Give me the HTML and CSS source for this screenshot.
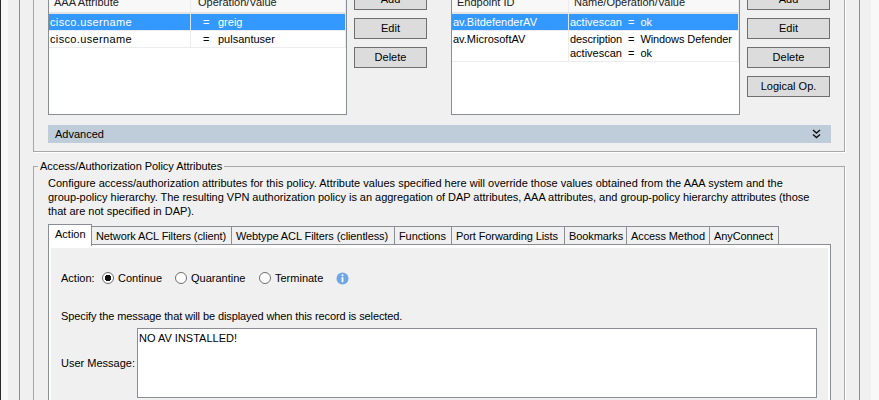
FILE: index.html
```html
<!DOCTYPE html>
<html lang="en">
<head>
<meta charset="utf-8">
<title>Add Dynamic Access Policy</title>
<link rel="stylesheet" href="styles.css">
</head>
<body>
<div class="window">
  <div class="frame">
    <section class="group top-group">
      <div class="lists">
        <div class="listbox aaa">
          <div class="row head"><div class="cell">AAA Attribute</div><div class="cell">Operation/Value</div></div>
          <div class="row selected"><div class="cell user">cisco.username</div><div class="cell val"><span class="eq">=</span>greig</div></div>
          <div class="row"><div class="cell user">cisco.username</div><div class="cell val"><span class="eq">=</span>pulsantuser</div></div>
        </div>
        <div class="buttons aaa-buttons">
          <button class="btn">Add</button>
          <button class="btn">Edit</button>
          <button class="btn">Delete</button>
        </div>
        <div class="listbox endpoint">
          <div class="row head"><div class="cell">Endpoint ID</div><div class="cell">Name/Operation/Value</div></div>
          <div class="row selected"><div class="cell">av.BitdefenderAV</div><div class="cell"><span class="name">activescan</span><span class="eq2">=</span>ok</div></div>
          <div class="row"><div class="cell">av.MicrosoftAV</div><div class="cell"><div class="defender"><span class="name">description</span><span class="eq2">=</span>Windows Defender</div><div><span class="name">activescan</span><span class="eq2">=</span>ok</div></div></div>
        </div>
        <div class="buttons ep-buttons">
          <button class="btn">Add</button>
          <button class="btn">Edit</button>
          <button class="btn">Delete</button>
          <button class="btn">Logical Op.</button>
        </div>
      </div>
      <div class="advanced">
        <span>Advanced</span>
        <svg class="chev" width="9" height="10" viewBox="0 0 9 10"><path d="M1 1l3.5 3L8 1M1 5.5l3.5 3 3.5-3" fill="none" stroke="#111" stroke-width="1.5"/></svg>
      </div>
    </section>
    <fieldset class="group attrs">
      <legend>Access/Authorization Policy Attributes</legend>
      <p class="desc">Configure access/authorization attributes for this policy. Attribute values specified here will override those values obtained from the AAA system and the<br><span class="tight">group-policy hierarchy. The resulting VPN authorization policy is an aggregation of DAP attributes, AAA attributes, and group-policy hierarchy attributes (those</span><br>that are not specified in DAP).</p>
      <div class="tabs">
        <div class="tab active">Action</div>
        <div class="tab t1">Network ACL Filters (client)</div>
        <div class="tab t2">Webtype ACL Filters (clientless)</div>
        <div class="tab t3">Functions</div>
        <div class="tab t4">Port Forwarding Lists</div>
        <div class="tab t5">Bookmarks</div>
        <div class="tab t6">Access Method</div>
        <div class="tab t7">AnyConnect</div>
      </div>
      <div class="panel">
        <div class="action-row">
          <span class="action-label">Action:</span>
          <span class="radio on"></span><span class="opt o1">Continue</span>
          <span class="radio"></span><span class="opt o2">Quarantine</span>
          <span class="radio"></span><span class="opt o3">Terminate</span>
          <svg class="info" width="13" height="13" viewBox="0 0 13 13"><circle cx="6.5" cy="6.5" r="6" fill="#6fa6e6"/><rect x="5.6" y="2.4" width="1.8" height="1.8" fill="#fff"/><rect x="5.6" y="5.2" width="1.8" height="5" fill="#fff"/></svg>
        </div>
        <p class="spec">Specify the message that will be displayed when this record is selected.</p>
        <div class="msg-row">
          <span class="msg-label">User Message:</span>
          <div class="textarea">NO AV INSTALLED!</div>
        </div>
      </div>
    </fieldset>
  </div>
</div>
</body>
</html>
```
FILE: styles.css
```css
* { box-sizing: border-box; }
html, body { margin: 0; padding: 0; }
body {
  width: 879px;
  height: 400px;
  overflow: hidden;
  background: #f0f0f0;
  color: #000;
  font: 11px/14px "Liberation Sans", sans-serif;
}
.window {
  height: 460px;
  margin-top: -40px;
  padding: 0 8px 0 8px;
  background: #f0f0f0;
  border-left: 1px solid #2a2a2a;
  box-shadow: inset 7px 0 0 #f8f8f8, inset -8px 0 0 #f8f8f8;
}
.frame {
  margin-left: 10px;
  width: 841px;
  height: 460px;
  padding: 0 13px;
  border-left: 1px solid #8a8d94;
  border-right: 1px solid #8a8d94;
}
.group {
  border: 1px solid #a8a8a8;
  box-shadow: 1px 1px 0 #fff;
}
.top-group {
  width: 812px;
  height: 192px;
  padding: 0 13px 0 14px;
  border-top: 0;
}
.lists { display: flex; height: 155px; }
.listbox {
  background: #fff;
  border: 1px solid #8a8d94;
  border-top: 0;
  height: 155px;
}
.aaa { width: 299px; }
.endpoint { width: 289px; margin-left: 24px; }
.row {
  display: grid;
  height: 17px;
  border-bottom: 1px solid #ececec;
}
.aaa .row { grid-template-columns: 142px 1fr; }
.endpoint .row { grid-template-columns: 117px 1fr; }
.endpoint .row:last-child { height: 31px; }
.cell { padding: 1px 0 0 1px; border-right: 1px solid #ececec; }
.user { letter-spacing: 0.35px; }
.val { padding-left: 12px; }
.eq { display: inline-block; width: 15px; }
.eq2 { display: inline-block; margin: 0 6px; }
.defender { letter-spacing: -0.1px; }
.head {
  height: 54px;
  align-items: end;
  background: #f8f8f8;
  border-bottom: 2px solid #e4e4e4;
  color: #222;
}
.head .cell { height: 23px; padding: 6px 0 3px 5px; }
.aaa .head .cell + .cell { padding-left: 7px; }
.selected { background: #3399ff; color: #fff; }
.selected .cell { border-right-color: #d8e8f8; }
.buttons {
  display: flex;
  flex-direction: column;
  gap: 8px;
  margin: 29px 0 0 7px;
}
.btn {
  display: block;
  height: 21px;
  padding: 0 0 1px;
  background: #dcdcdc;
  border: 1px solid #6f6f6f;
  color: #000;
  font: inherit;
}
.aaa-buttons .btn { width: 73px; }
.ep-buttons .btn { width: 83px; }
.advanced {
  display: flex;
  justify-content: space-between;
  align-items: center;
  height: 18px;
  margin-top: 10px;
  padding: 0 10px 0 7px;
  background: #bfcddb;
  width: 783px;
}
.attrs {
  margin: 7px 0 0;
  padding: 0 13px 0 14px;
  width: 812px;
  min-width: 0;
  height: 300px;
}
legend {
  margin-left: -10px;
  padding: 0 2px;
  line-height: 14px;
  letter-spacing: -0.05px;
}
.desc { margin: 3px 0 0; height: 42px; white-space: nowrap; }
.tight { letter-spacing: -0.03px; }
.tabs { display: flex; align-items: flex-start; height: 22px; margin-top: 6px; position: relative; z-index: 1; }
.tab {
  height: 18px;
  margin-top: 2px;
  padding-left: 4px;
  border: 1px solid #8a8d94;
  border-left: 0;
  border-bottom: 0;
  line-height: 18px;
  white-space: nowrap;
  letter-spacing: -0.1px;
}
.tab.active {
  height: 22px;
  width: 44px;
  margin-top: 0;
  padding-left: 6px;
  background: #fff;
  border-left: 1px solid #8a8d94;
  letter-spacing: 0;
}
.t1 { width: 140px; }
.t2 { width: 163px; }
.t3 { width: 57px; }
.t4 { width: 113px; }
.t5 { width: 62px; }
.t6 { width: 83px; }
.t7 { width: 69px; }
.panel {
  width: 783px;
  height: 170px;
  margin-top: -2px;
  padding: 0 12px;
  border: 1px solid #8a8d94;
  box-shadow: inset 0 3px 0 #fff, inset 2px 0 0 #fff, inset -2px 0 0 #fff;
}
.action-row { display: flex; align-items: center; height: 14px; margin-top: 26px; }
.action-label { width: 41px; }
.radio {
  width: 12px;
  height: 12px;
  border: 1px solid #6f6f6f;
  border-radius: 50%;
  background: #fff;
}
.radio.on { background: radial-gradient(circle, #111 0 3px, #fff 3.5px); }
.opt { margin-left: 4px; }
.o1 { width: 57px; }
.o2 { width: 68px; }
.o3 { width: 61px; }
.spec { margin: 24px 0 0; letter-spacing: -0.1px; }
.msg-row { display: flex; align-items: center; margin-top: 5px; }
.msg-label { width: 76px; }
.textarea {
  align-self: flex-start;
  width: 680px;
  height: 70px;
  padding: 2px 1px;
  background: #fff;
  border: 1px solid #8a8d94;
}
```
